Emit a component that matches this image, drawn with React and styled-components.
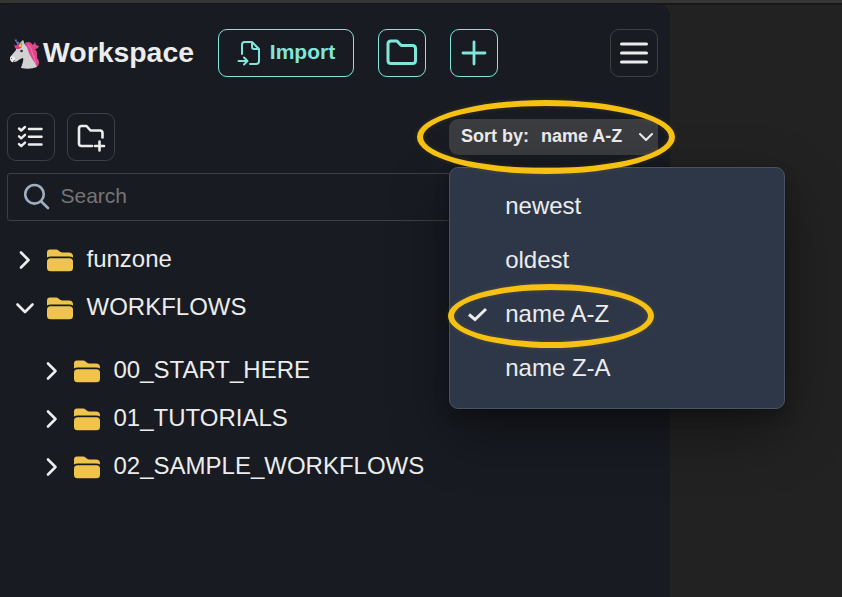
import React from "react";
import styled, { createGlobalStyle } from "styled-components";

const Global = createGlobalStyle`
  * { box-sizing: border-box; }
  body { margin: 0; background: #222; overflow: hidden; font-family: "Liberation Sans", Arial, sans-serif; }
  button { font: inherit; margin: 0; }
`;

const Page = styled.div`
  position: relative;
  height: 597px;
  overflow: hidden;
  background: #222;
  border-top: 3px solid #353535;
  color: #ececec;
`;

const Panel = styled.aside`
  width: 670px;
  height: 592px;
  margin-top: 2px;
  padding: 24px 12px 0 7px;
  border-radius: 3px 10px 0 0;
  background: #181b22;
`;

const Backdrop = styled.div`
  height: 594px;
  overflow: hidden;
  background: linear-gradient(#171717 2px, #222 2px);
`;

const Header = styled.header`
  display: flex;
  align-items: center;
  gap: 24px;
  height: 48px;
`;

const Brand = styled.div`
  display: flex;
  align-items: center;
  width: 187px;
  flex: none;
  padding-left: 3px;
`;

const Title = styled.h1`
  margin: 0 0 0 3px;
  padding-bottom: 2px;
  font-size: 28.4px;
  line-height: 36px;
  font-weight: 700;
  white-space: nowrap;
`;

const Button = styled.button`
  display: flex;
  align-items: center;
  justify-content: center;
  flex: none;
  width: ${(p) => p.$width || 48}px;
  height: 48px;
  padding: 0;
  border: 1px solid ${(p) => (p.$accent ? "#81e6d9" : "#3d3f43")};
  border-radius: 9px;
  background: transparent;
  color: ${(p) => (p.$accent ? "#81e6d9" : "#ececec")};
  margin-left: ${(p) => (p.$end ? "auto" : 0)};
`;

const ButtonLabel = styled.span`
  margin-left: 9px;
  padding-bottom: 2px;
  font-size: 21px;
  line-height: 28px;
  font-weight: 700;
`;

const Toolbar = styled.div`
  display: flex;
  align-items: center;
  gap: 12px;
  height: 48px;
  margin-top: 36px;
`;

const SortButton = styled.button`
  display: flex;
  align-items: center;
  width: 209px;
  height: 36px;
  margin-left: auto;
  padding: 0 3px 2px 12px;
  border: 0;
  border-radius: 9px 3px 3px 9px;
  background: #3b3c40;
  color: #ececec;
  font-size: 18px;
  font-weight: 700;
  white-space: nowrap;
`;

const SortValue = styled.span`
  margin: 0 auto 0 12px;
`;

const SearchBox = styled.label`
  display: flex;
  align-items: center;
  height: 48px;
  margin-top: 12px;
  padding-left: 15px;
  border: 1px solid #3d3f43;
  border-radius: 3px;
`;

const SearchInput = styled.input`
  width: 300px;
  height: 36px;
  margin: 0 0 2px 9.5px;
  padding: 0;
  border: 0;
  outline: 0;
  background: transparent;
  color: #ececec;
  font: 21px "Liberation Sans", Arial, sans-serif;
  &::placeholder { color: #757575; opacity: 1; }
`;

const Tree = styled.div`
  padding-top: 15px;
`;

const Branch = styled.div`
  padding: 15px 0 0 27px;
`;

const TreeRow = styled.div`
  display: flex;
  align-items: center;
  height: 48px;
  font-size: 24px;
  white-space: nowrap;
`;

const Caret = styled.svg`
  flex: none;
  margin: 0 8px 0 6px;
`;

const FolderName = styled.span`
  margin-left: 13.5px;
  padding-bottom: 2px;
`;

const Menu = styled.div`
  position: absolute;
  left: 449px;
  top: 164px;
  width: 336px;
  height: 242px;
  padding-top: 12px;
  border: 1px solid #4a5464;
  border-radius: 9px;
  background: #2e3748;
  box-shadow: 0 0 0 1px rgba(0, 0, 0, 0.1), 0 7px 15px rgba(0, 0, 0, 0.2), 0 22px 60px rgba(0, 0, 0, 0.4);
`;

const MenuItem = styled.div`
  display: flex;
  align-items: center;
  height: 54px;
  padding: 0 18px 0 17px;
  font-size: 24px;
`;

const CheckSlot = styled.span`
  display: flex;
  width: 38.2px;
  padding-bottom: 3px;
`;

const MenuText = styled.span`
  padding-bottom: 2px;
`;

const Ring = styled.div`
  position: absolute;
  left: ${(p) => p.$x}px;
  top: ${(p) => p.$y}px;
  width: ${(p) => p.$w}px;
  height: ${(p) => p.$h}px;
  border: 6px solid #f6c113;
  border-radius: 50%;
  filter: drop-shadow(0 0 2px rgba(246, 193, 19, 0.15));
  pointer-events: none;
`;

const Line = ({ w = 26, h = 26, sw = 2.4, children, ...rest }) => (
  <svg width={w} height={h} viewBox={`0 0 ${w} ${h}`} fill="none" stroke="currentColor" strokeWidth={sw} strokeLinecap="round" strokeLinejoin="round" {...rest}>
    {children}
  </svg>
);

const Unicorn = () => (
  <svg width="30" height="32" viewBox="0 0 30 32">
    <path d="M15 6Q20 3 23 8L25 5L26 8L29 9Q28 12 25 12C28 15 27 18 27 21C30 23 29 28 28 29L24 30L17 22Z" fill="#df4589" />
    <path d="M18 8C23 11 21 15 23 18C25 20 24 23 26 26" fill="none" stroke="#f06ba3" strokeWidth="1.3" />
    <path d="M9 7L13 3L15 8C18 10 18 15 20 18C22 22 26 27 27 30Q20 33 11 31C12 27 14 24 13 21C10 21 8 25 4 25Q1 26 0 22L1 19L6 13Q6 9 9 7Z" fill="#d2d2d2" />
    <path d="M1 19L5 20L5 24L3 25Q0 24 0 21Z" fill="#ededed" />
    <path d="M4 1L10 8L8 9Z" fill="#6e69b9" />
    <path d="M5 3.5L7 3M7 6L9 5" stroke="#65b6e7" strokeWidth=".8" />
    <path d="M4 8Q7 9 9 7L12 6V10Q8 14 5 11Z" fill="#d33b80" />
    <path d="M9 8L11 6L12 10L9 10Z" fill="#eebd36" />
    <path d="M11.5 5.5L13 3L14.5 8L12 8Z" fill="#c3c3c3" />
    <circle cx="11.5" cy="14" r="1.3" fill="#292c31" />
    <path d="M1.5 21V22M3 24.5L5 23.5" stroke="#4b4b4b" strokeWidth=".9" />
  </svg>
);

const ImportIcon = () => (
  <Line w={24} h={26} sw={2}>
    <path d="M5 14V5Q5 2 7.5 2H15L22 9V21Q22 24 19 24H13M15 2V7Q15 9 17 9H22" />
    <path d="M1.5 21H10M7 17.5L10.5 21L7 24.5" />
  </Line>
);

const FolderOutline = () => (
  <Line w={32} h={28} sw={3}>
    <path d="M5 2H11L15.2 6.5H26.5Q29.5 6.5 29.5 9.5V21.5Q29.5 24.5 26.5 24.5H5Q2 24.5 2 21.5V5Q2 2 5 2Z" />
  </Line>
);

const PlusIcon = () => (
  <Line sw={2.8}><path d="M13 2V24M2 13H24" /></Line>
);

const HamburgerIcon = () => (
  <Line w={30} h={24} sw={3}><path d="M2.5 3H27.5M2.5 12H27.5M2.5 21H27.5" /></Line>
);

const ChecklistIcon = () => (
  <Line w={28} h={24} sw={2.5}>
    <path d="M12 4H24.5M12 11.7H24.5M12 19.5H24.5" />
    <path d="M2 3.5L4.2 5.5L8 2M2 11.3L4.2 13.3L8 9.8M2 19.1L4.2 21.1L8 17.6" strokeWidth="2.4" />
  </Line>
);

const FolderPlusIcon = () => (
  <Line w={30} h={30} sw={2.6}>
    <path d="M16 24H5.5Q3 24 3 21.5V6.5Q3 4 5.5 4H10.5L14.5 8.5H24Q26.5 8.5 26.5 11V15.5M23.5 19.5V28.5M19 24H28" />
  </Line>
);

const SearchIcon = () => (
  <Line w={28} h={28} sw={2.6} color="#a0aec0"><circle cx="11.5" cy="11.3" r="9.3" /><path d="M18.3 18.5L25 25" /></Line>
);

const FolderIcon = () => (
  <svg width="26" height="24" viewBox="0 0 26 24" fill="#f0c44c">
    <path d="M0 8.5V4.5Q0 1.5 3 1.5H9Q10.5 1.5 11.5 2.5L13.5 4.1Q14.2 4.5 15.2 4.5H22Q26 4.5 26 8.5V9.5Q24.8 8.5 22 8.5H4Q1.2 8.5 0 9.5Z" />
    <rect y="10.3" width="26" height="13" rx="3.5" />
  </svg>
);

const TREE = [
  { name: "funzone" },
  {
    name: "WORKFLOWS",
    children: [{ name: "00_START_HERE" }, { name: "01_TUTORIALS" }, { name: "02_SAMPLE_WORKFLOWS" }],
  },
];
const SORTS = ["newest", "oldest", "name A-Z", "name Z-A"];
const CURRENT_SORT = "name A-Z";

function Folder({ node }) {
  return (
    <>
      <TreeRow>
        <Caret width="26" height="26" viewBox="0 0 26 26" fill="none" stroke="currentColor" strokeWidth="2.6" strokeLinecap="round" strokeLinejoin="round">
          <path d={node.children ? "M4.5 9.5L12 17L19.5 9.5" : "M8 5.5L15.5 13L8 20.5"} />
        </Caret>
        <FolderIcon />
        <FolderName>{node.name}</FolderName>
      </TreeRow>
      {node.children && <Branch>{node.children.map((c) => <Folder key={c.name} node={c} />)}</Branch>}
    </>
  );
}

export default function App() {
  return (
    <Page>
      <Global />
      <Backdrop>
        <Panel>
          <Header>
            <Brand><Unicorn /><Title>Workspace</Title></Brand>
            <Button $accent $width={136}><ImportIcon /><ButtonLabel>Import</ButtonLabel></Button>
            <Button $accent aria-label="New folder"><FolderOutline /></Button>
            <Button $accent aria-label="New workflow"><PlusIcon /></Button>
            <Button $end aria-label="Menu"><HamburgerIcon /></Button>
          </Header>
          <Toolbar>
            <Button aria-label="Select items"><ChecklistIcon /></Button>
            <Button aria-label="Add folder"><FolderPlusIcon /></Button>
            <SortButton>
              Sort by:<SortValue>{CURRENT_SORT}</SortValue>
              <Line w={18} h={14} sw={2.1}><path d="M3 5L9 11L15 5" /></Line>
            </SortButton>
          </Toolbar>
          <SearchBox><SearchIcon /><SearchInput placeholder="Search" /></SearchBox>
          <Tree>{TREE.map((n) => <Folder key={n.name} node={n} />)}</Tree>
        </Panel>
      </Backdrop>
      <Menu>
        {SORTS.map((s) => (
          <MenuItem key={s}>
            <CheckSlot>
              {s === CURRENT_SORT && <Line w={22} h={18} sw={3}><path d="M2 9.5L8 14.5L19 4" strokeLinecap="butt" strokeLinejoin="miter" /></Line>}
            </CheckSlot>
            <MenuText>{s}</MenuText>
          </MenuItem>
        ))}
      </Menu>
      <Ring $x={417} $y={97} $w={258} $h={74} />
      <Ring $x={448} $y={281} $w={206} $h={64} />
    </Page>
  );
}
